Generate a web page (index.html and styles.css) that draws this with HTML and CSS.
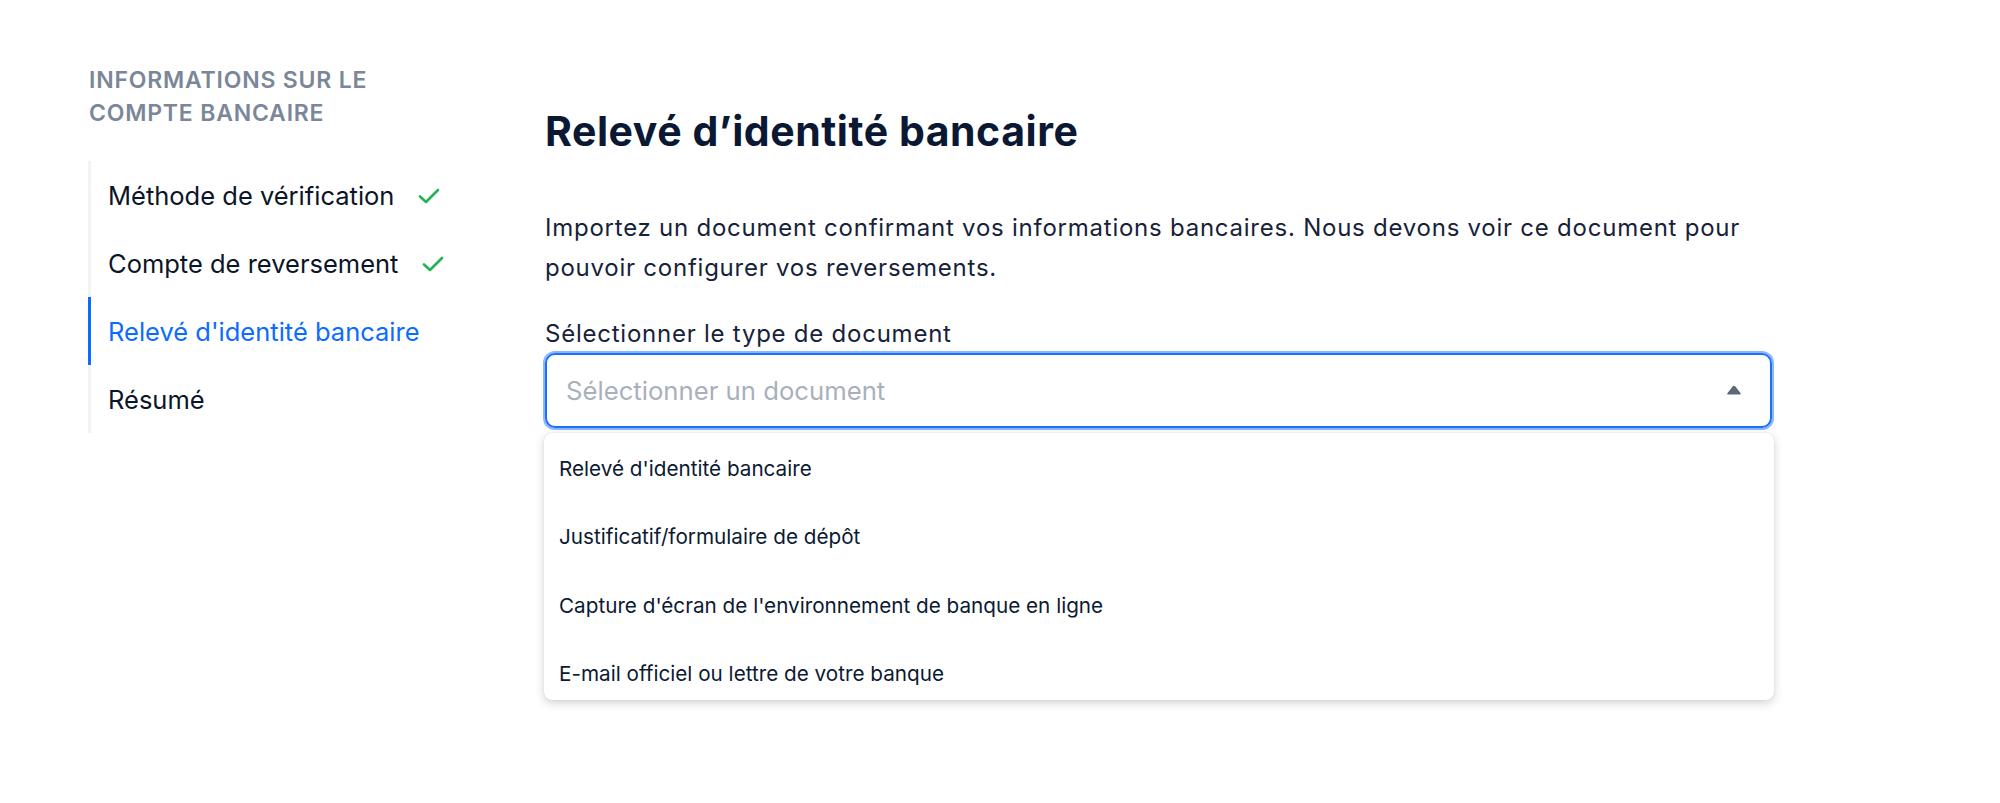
FILE: index.html
```html
<!DOCTYPE html>
<html lang="fr">
<head>
<meta charset="utf-8">
<title>Relevé d’identité bancaire</title>
<link rel="stylesheet" href="styles.css">
</head>
<body>
<div class="page">
  <aside class="sidebar">
    <div class="side-title">INFORMATIONS SUR LE<br>COMPTE BANCAIRE</div>
    <ul class="steps">
      <li class="step done"><span>Méthode de vérification</span>
        <svg class="check" viewBox="0 0 22 16" width="22" height="16"><path d="M2 8.5 L8 14 L20 2" fill="none" stroke="#20b455" stroke-width="2.6" stroke-linecap="round" stroke-linejoin="round"/></svg>
      </li>
      <li class="step done"><span>Compte de reversement</span>
        <svg class="check" viewBox="0 0 22 16" width="22" height="16"><path d="M2 8.5 L8 14 L20 2" fill="none" stroke="#20b455" stroke-width="2.6" stroke-linecap="round" stroke-linejoin="round"/></svg>
      </li>
      <li class="step active"><span>Relevé d'identité bancaire</span></li>
      <li class="step"><span>Résumé</span></li>
    </ul>
  </aside>
  <main class="content">
    <h1 class="title">Relevé d’identité bancaire</h1>
    <p class="intro">Importez un document confirmant vos informations bancaires. Nous devons voir ce document pour pouvoir configurer vos reversements.</p>
    <div class="field-label">Sélectionner le type de document</div>
    <div class="select-wrap">
      <div class="select">
        <span class="placeholder">Sélectionner un document</span>
        <svg class="caret" viewBox="0 0 16 11" width="16" height="11"><path d="M6.6 1.6 Q8 -0.2 9.4 1.6 L14.4 8 Q15.4 9.6 13.6 9.6 L2.4 9.6 Q0.6 9.6 1.6 8 Z" fill="#5d6877"/></svg>
      </div>
      <ul class="menu">
        <li>Relevé d'identité bancaire</li>
        <li>Justificatif/formulaire de dépôt</li>
        <li>Capture d'écran de l'environnement de banque en ligne</li>
        <li>E-mail officiel ou lettre de votre banque</li>
      </ul>
    </div>
  </main>
</div>
</body>
</html>
```
FILE: styles.css
```css
* { box-sizing: border-box; }
html, body { margin: 0; padding: 0; background: #ffffff; }
body {
  font-family: Inter, "Noto Sans", Arial, sans-serif;
  color: #0c1a33;
  width: 2000px;
  height: 803px;
  overflow: hidden;
}
.page {
  display: flex;
  padding-left: 88px;
}
.sidebar {
  width: 457px;
  flex: none;
  padding-top: 64px;
}
.side-title {
  font-size: 23px;
  line-height: 33px;
  font-weight: 600;
  color: #7b8798;
  letter-spacing: 0.8px;
  margin-left: 1px;
}
.steps {
  list-style: none;
  margin: 31px 0 0 0;
  padding: 0;
  border-left: 3px solid #f1f3f6;
}
.step {
  height: 68px;
  display: flex;
  align-items: center;
  padding-left: 17px;
  font-size: 25.5px;
  white-space: nowrap;
  color: #0b1528;
  margin-left: -3px;
  border-left: 3px solid transparent;
}
.step.active {
  border-left-color: #0b6cff;
  color: #0b6cff;
}
.check { margin-left: 24px; margin-top: 2px; flex: none; }
.content {
  width: 1227px;
  flex: none;
  padding-top: 104px;
}
.title {
  margin: 0;
  font-size: 41px;
  line-height: 54px;
  font-weight: 700;
  letter-spacing: 0.55px;
  color: #0b1833;
}
.intro {
  margin: 50px 0 0 0;
  font-size: 24px;
  line-height: 40px;
  letter-spacing: 0.76px;
  color: #17223a;
  max-width: 1215px;
}
.field-label {
  margin-top: 31px;
  font-size: 24px;
  line-height: 30px;
  letter-spacing: 0.76px;
  color: #17223a;
}
.select-wrap {
  position: relative;
  margin-top: 4px;
}
.select {
  height: 75px;
  border: 2px solid #1a6fff;
  border-radius: 10px;
  box-shadow: 0 0 0 2px #8cb6ff;
  display: flex;
  align-items: center;
  justify-content: space-between;
  padding: 0 28px 0 19px;
}
.placeholder {
  font-size: 25.7px;
  color: #a8b0bc;
}
.caret { display: block; }
.menu {
  position: absolute;
  left: -1px;
  right: -2px;
  top: 80px;
  height: 267px;
  overflow: hidden;
  margin: 0;
  padding: 1px 0 0 0;
  list-style: none;
  background: #ffffff;
  border-radius: 8px;
  box-shadow: 0 3px 10px rgba(40, 50, 70, 0.22), 0 0 1px rgba(40, 50, 70, 0.2);
}
.menu li {
  height: 68.5px;
  display: flex;
  align-items: center;
  padding-left: 15px;
  font-size: 20.7px;
  color: #0c1a33;
}
```
